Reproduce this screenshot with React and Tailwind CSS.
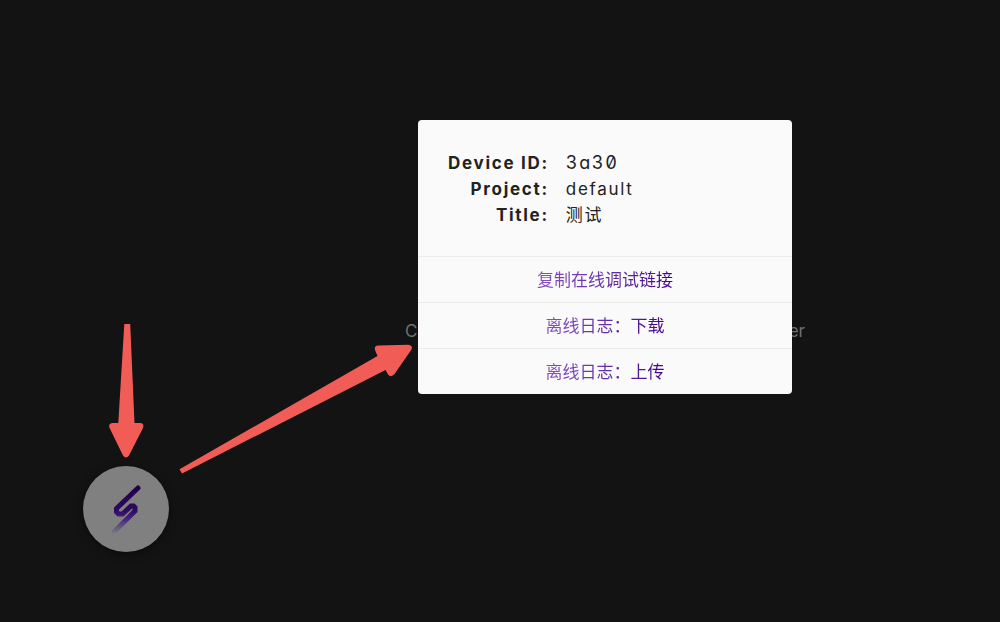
const device = [
  { label: "Device ID:", value: "3a30", mono: true },
  { label: "Project:", value: "default" },
  { label: "Title:", value: "测试" },
];

const actions = ["复制在线调试链接", "离线日志：下载", "离线日志：上传"];

function Logo() {
  return (
    <svg viewBox="1 1 50 65" className="h-[65px] w-[50px]" fill="none" aria-hidden="true">
      <defs>
        <linearGradient id="bolt" x1="0" y1="10" x2="0" y2="58" gradientUnits="userSpaceOnUse">
          <stop offset="0" stopColor="#210048" />
          <stop offset="0.5" stopColor="#2b0a62" />
          <stop offset="0.7" stopColor="#45297a" />
          <stop offset="1" stopColor="#808080" />
        </linearGradient>
      </defs>
      <path
        d="M38 12 L16.500 32.500 V36 L18.500 38 H22.500 L31 30 H33.500 L35 31.500 V35 L14 56"
        stroke="url(#bolt)"
        strokeWidth="5"
        strokeLinecap="round"
        strokeLinejoin="miter"
      />
    </svg>
  );
}

function Arrows() {
  return (
    <svg
      className="pointer-events-none absolute left-0 top-0 h-[622px] w-[1000px]"
      viewBox="0 0 1000 622"
      fill="#f25c57"
      aria-hidden="true"
    >
      <path d="M124.3 324 H130.2 L134.5 423 H141 Q144.5 424 143 428 L129 455.500 Q126 459.500 123 455.500 L109.600 428 Q108 424 112 423 H118.300 Z" />
      <path d="M179.500 469.300 L377.500 356 L375 350 Q374 346 378 345.500 L408.500 344.800 Q413 345.500 411.500 349.500 L394.500 374 Q391 378 388 374.500 L385.500 370 L182 473.500 Z" />
    </svg>
  );
}

export default function App() {
  return (
    <main className="relative flex min-h-screen items-start justify-center overflow-hidden bg-[#131313] pl-[210px] pt-[120px] font-['Inter','Noto_Sans_CJK_SC',sans-serif] text-[17px]">
      <div className="relative w-[374px]">
        <p className="absolute -left-[13px] -right-[13px] top-[198px] flex justify-between leading-[26px] text-[#707070]">
          <span>C</span>
          <span>er</span>
        </p>

        <section
          role="dialog"
          aria-label="Device"
          className="relative overflow-hidden rounded bg-[#fafafa]"
        >
          <div className="px-[30px] pb-7 pt-[30px]">
            <table className="leading-[26px] tracking-widest text-[#222222]">
              <tbody>
                {device.map((item) => (
                  <tr key={item.label}>
                    <th scope="row" className="p-0 pr-[17px] text-right font-bold">
                      {item.label}
                    </th>
                    <td
                      className={
                        item.mono
                          ? "p-0 text-[18px] leading-[26px] [font-feature-settings:'zero','cv11','tnum']"
                          : "p-0"
                      }
                    >
                      {item.value}
                    </td>
                  </tr>
                ))}
              </tbody>
            </table>
          </div>
          {actions.map((action) => (
            <button
              key={action}
              type="button"
              className="flex h-[46px] w-full cursor-pointer items-center justify-center border-t border-[#ebebeb]"
            >
              <span className="bg-linear-to-r from-[#8a4fc0] to-[#42008a] bg-clip-text leading-[26px] text-transparent">
                {action}
              </span>
            </button>
          ))}
        </section>
      </div>

      <button
        type="button"
        aria-label="Open"
        className="absolute left-[83px] top-[466px] flex size-[86px] items-center justify-center rounded-full bg-[#808080] shadow-[0_2px_8px_rgba(0,0,0,0.5)]"
      >
        <Logo />
      </button>

      <Arrows />
    </main>
  );
}
